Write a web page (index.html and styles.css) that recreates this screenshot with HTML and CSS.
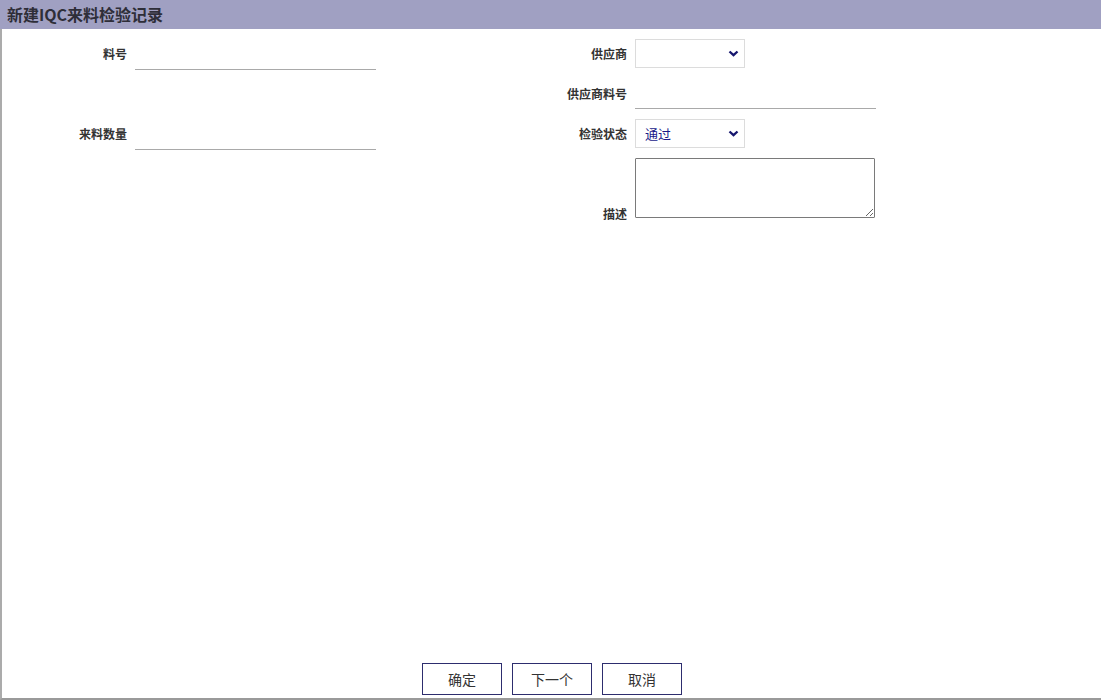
FILE: index.html
```html
<!DOCTYPE html>
<html lang="zh-CN">
<head>
<meta charset="utf-8">
<title>新建IQC来料检验记录</title>
<link rel="stylesheet" href="styles.css">
</head>
<body>
<div class="dialog">
  <div class="title">新建IQC来料检验记录</div>
  <div class="body">
    <div class="form">
      <label class="lbl r1 c1">料号</label>
      <div class="field r1 c2 left"><input class="line" type="text"></div>
      <label class="lbl r1 c3">供应商</label>
      <div class="field r1 c4">
        <div class="sel">
          <span class="sel-text"></span>
          <svg class="chev" width="11" height="7" viewBox="0 0 11 7"><path d="M1.5 1.5 L5.5 5.2 L9.5 1.5" fill="none" stroke="#16166e" stroke-width="2.3"/></svg>
        </div>
      </div>

      <label class="lbl r2 c3">供应商料号</label>
      <div class="field r2 c4"><input class="line" type="text"></div>

      <label class="lbl r3 c1">来料数量</label>
      <div class="field r3 c2 left"><input class="line" type="text"></div>
      <label class="lbl r3 c3">检验状态</label>
      <div class="field r3 c4">
        <div class="sel">
          <span class="sel-text">通过</span>
          <svg class="chev" width="11" height="7" viewBox="0 0 11 7"><path d="M1.5 1.5 L5.5 5.2 L9.5 1.5" fill="none" stroke="#16166e" stroke-width="2.3"/></svg>
        </div>
      </div>

      <label class="lbl r4 c3 bottom">描述</label>
      <div class="field r4 c4"><textarea class="area"></textarea></div>
    </div>
  </div>
  <div class="footer">
    <button class="btn">确定</button>
    <button class="btn">下一个</button>
    <button class="btn">取消</button>
  </div>
</div>
</body>
</html>
```

FILE: styles.css
```css
html, body {
  margin: 0;
  padding: 0;
  background: #ffffff;
}
body {
  font-family: "Noto Sans CJK SC", "Noto Sans", "Liberation Sans", sans-serif;
  color: #333333;
}
.dialog {
  width: 1101px;
  height: 700px;
  display: flex;
  flex-direction: column;
  box-sizing: border-box;
}
.title {
  height: 29px;
  background: #a0a0c2;
  color: #2e2e38;
  font-size: 16px;
  font-weight: 700;
  line-height: 29px;
  padding-left: 7px;
  flex: none;
}
.body {
  flex: 1;
  border-left: 2px solid #ababab;
  padding-top: 10px;
}
.form {
  display: grid;
  grid-template-columns: 125px 241px 243px 241px;
  grid-template-rows: 30px 30px 30px 60px;
  column-gap: 8px;
  row-gap: 10px;
}
.r1 { grid-row: 1; }
.r2 { grid-row: 2; }
.r3 { grid-row: 3; }
.r4 { grid-row: 4; }
.c1 { grid-column: 1; }
.c2 { grid-column: 2; }
.c3 { grid-column: 3; }
.c4 { grid-column: 4; }
.lbl {
  display: flex;
  align-items: center;
  justify-content: flex-end;
  font-size: 12px;
  font-weight: 700;
  color: #333333;
  line-height: 16px;
}
.lbl.bottom {
  align-items: flex-end;
  margin-bottom: -3px;
}
.field {
  display: flex;
}
.field.left {
  padding-top: 1px;
}
.line {
  width: 241px;
  height: 30px;
  box-sizing: border-box;
  border: none;
  border-bottom: 1px solid #a9a9a9;
  outline: none;
  padding: 0 4px;
  margin: 0;
  font: inherit;
  font-size: 13px;
  background: transparent;
}
.sel {
  width: 110px;
  height: 29px;
  box-sizing: border-box;
  border: 1px solid #dcdcdc;
  display: flex;
  align-items: center;
  justify-content: space-between;
  padding: 0 5px 0 9px;
}
.sel-text {
  font-size: 13px;
  color: #1a1a8a;
}
.chev {
  display: block;
}
.area {
  display: block;
  width: 240px;
  height: 60px;
  box-sizing: border-box;
  border: 1px solid #7a7a7a;
  border-radius: 1px;
  margin: -1px 0 0 0;
  padding: 2px;
  font: inherit;
  font-size: 13px;
}
.footer {
  flex: none;
  display: flex;
  justify-content: center;
  gap: 10px;
  padding: 0 0 3px 1px;
  border-left: 2px solid #ababab;
  border-bottom: 2px solid #9a9a9a;
}
.btn {
  width: 80px;
  height: 32px;
  box-sizing: border-box;
  background: #ffffff;
  border: 1px solid #2d2d6e;
  color: #333333;
  font-family: "Noto Sans CJK SC", "Noto Sans", sans-serif;
  font-size: 14px;
  padding: 0;
  margin: 0;
}
```
